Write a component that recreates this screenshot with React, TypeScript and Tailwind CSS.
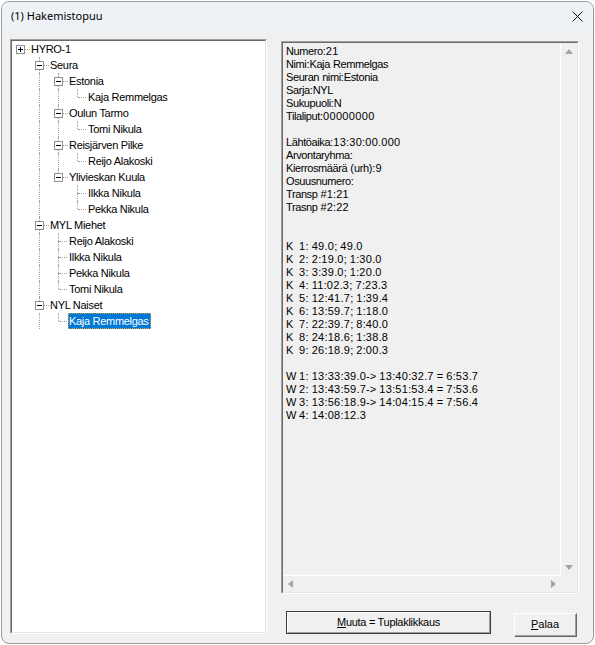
import React from 'react'

type Row = {
  label: string
  level: number
  box?: 'plus' | 'minus'
  up: boolean
  down: boolean
  cont: number[]
  selected?: boolean
}

const rows: Row[] = [
  { label: 'HYRO-1', level: 0, box: 'plus', up: false, down: false, cont: [] },
  { label: 'Seura', level: 1, box: 'minus', up: true, down: true, cont: [] },
  { label: 'Estonia', level: 2, box: 'minus', up: true, down: true, cont: [1] },
  { label: 'Kaja Remmelgas', level: 3, up: true, down: false, cont: [1, 2] },
  { label: 'Oulun Tarmo', level: 2, box: 'minus', up: true, down: true, cont: [1] },
  { label: 'Tomi Nikula', level: 3, up: true, down: false, cont: [1, 2] },
  { label: 'Reisjärven Pilke', level: 2, box: 'minus', up: true, down: true, cont: [1] },
  { label: 'Reijo Alakoski', level: 3, up: true, down: false, cont: [1, 2] },
  { label: 'Ylivieskan Kuula', level: 2, box: 'minus', up: true, down: false, cont: [1] },
  { label: 'Ilkka Nikula', level: 3, up: true, down: true, cont: [1] },
  { label: 'Pekka Nikula', level: 3, up: true, down: false, cont: [1] },
  { label: 'MYL Miehet', level: 1, box: 'minus', up: true, down: true, cont: [] },
  { label: 'Reijo Alakoski', level: 2, up: true, down: true, cont: [1] },
  { label: 'Ilkka Nikula', level: 2, up: true, down: true, cont: [1] },
  { label: 'Pekka Nikula', level: 2, up: true, down: true, cont: [1] },
  { label: 'Tomi Nikula', level: 2, up: true, down: false, cont: [1] },
  { label: 'NYL Naiset', level: 1, box: 'minus', up: true, down: false, cont: [] },
  { label: 'Kaja Remmelgas', level: 2, up: true, down: false, cont: [1], selected: true },
]

const info = [
  'Numero:21',
  'Nimi:Kaja Remmelgas',
  'Seuran nimi:Estonia',
  'Sarja:NYL',
  'Sukupuoli:N',
  'Tilaliput:00000000',
  '',
  'Lähtöaika:13:30:00.000',
  'Arvontaryhma:',
  'Kierrosmäärä (urh):9',
  'Osuusnumero:',
  'Transp #1:21',
  'Trasnp #2:22',
  '',
  '',
  'K  1: 49.0; 49.0',
  'K  2: 2:19.0; 1:30.0',
  'K  3: 3:39.0; 1:20.0',
  'K  4: 11:02.3; 7:23.3',
  'K  5: 12:41.7; 1:39.4',
  'K  6: 13:59.7; 1:18.0',
  'K  7: 22:39.7; 8:40.0',
  'K  8: 24:18.6; 1:38.8',
  'K  9: 26:18.9; 2:00.3',
  '',
  'W 1: 13:33:39.0-> 13:40:32.7 = 6:53.7',
  'W 2: 13:43:59.7-> 13:51:53.4 = 7:53.6',
  'W 3: 13:56:18.9-> 14:04:15.4 = 7:56.4',
  'W 4: 14:08:12.3',
]

function InfoLine({ text }: { text: string }) {
  const parts = text.split(/(\d+|[A-Za-zÀ-ÿ]+)/).filter((p) => p !== '')
  return (
    <div className="h-[13px] leading-[13px] whitespace-pre text-black">
      {parts.map((p, i) =>
        /^\d/.test(p) ? (
          <span key={i} className="tracking-[0.35px]">{p}</span>
        ) : /^[A-Za-zÀ-ÿ]/.test(p) ? (
          <span key={i} className="tracking-[-0.4px]">{p}</span>
        ) : (
          <span key={i}>{p}</span>
        )
      )}
    </div>
  )
}

const dot = 'absolute border-dotted border-[#a0a0a0]'

function Column({ row, col }: { row: Row; col: number }) {
  if (col < row.level) {
    return (
      <div className="relative w-[19px] h-4 shrink-0">
        {row.cont.includes(col) && <div className={`${dot} left-[8px] top-0 h-4 border-l`} />}
      </div>
    )
  }
  const hasBox = !!row.box
  return (
    <div className="relative w-[19px] h-4 shrink-0">
      {row.up && <div className={`${dot} left-[8px] top-0 border-l ${hasBox ? 'h-[4px]' : 'h-[8px]'}`} />}
      {row.down && hasBox && <div className={`${dot} left-[8px] top-[13px] h-[3px] border-l`} />}
      {row.down && !hasBox && <div className={`${dot} left-[8px] top-[8px] h-[8px] border-l`} />}
      <div className={`${dot} top-[8px] border-t ${hasBox ? 'left-[13px] w-[5px]' : 'left-[9px] w-[8px]'}`} />
      {hasBox && (
        <div className="absolute left-[4px] top-[4px] w-[9px] h-[9px] border border-[#919191] bg-white">
          <div className="absolute left-[1px] top-[3px] w-[5px] h-[1px] bg-black" />
          {row.box === 'plus' && <div className="absolute left-[3px] top-[1px] w-[1px] h-[5px] bg-black" />}
        </div>
      )}
    </div>
  )
}

function TreeRow({ row }: { row: Row }) {
  const cols = Array.from({ length: row.level + 1 }, (_, i) => i)
  return (
    <div className="flex h-4 items-stretch">
      {cols.map((c) => (
        <Column key={c} row={row} col={c} />
      ))}
      <span
        className={`-ml-[1px] pl-[1px] pr-[2px] h-4 leading-4 whitespace-nowrap tracking-[-0.3px] ${
          row.selected ? 'bg-[#0078d7] text-white outline outline-1 outline-dotted outline-[#e0a040] -outline-offset-1' : 'text-black'
        }`}
      >
        {row.label}
      </span>
    </div>
  )
}

function Arrow({ dir }: { dir: 'up' | 'down' | 'left' | 'right' }) {
  const pts = {
    up: '0,5 8,5 4,0',
    down: '0,0 8,0 4,5',
    left: '5,0 5,8 0,4',
    right: '0,0 0,8 5,4',
  }[dir]
  const vertical = dir === 'up' || dir === 'down'
  return (
    <svg width={vertical ? 8 : 5} height={vertical ? 5 : 8} viewBox={vertical ? '0 0 8 5' : '0 0 5 8'}>
      <polygon points={pts} fill="#a3a3a3" />
    </svg>
  )
}

export default function App() {
  return (
    <div className="w-[595px] h-[645px] bg-white pl-[1px] pt-[1px]" style={{ fontFamily: '"Liberation Sans", Arial, sans-serif' }}>
      <div className="w-[593px] h-[643px] border border-[#9c9c9c] rounded-[8px] overflow-hidden bg-[#f0f0f0] flex flex-col">
        <div className="h-[28px] shrink-0 bg-[#eef2f7] flex items-center justify-between pl-[9px] pr-[10px]">
          <span className="text-[11px] text-black" style={{ fontFamily: '"Noto Sans", "Open Sans", sans-serif' }}>
            (1) Hakemistopuu
          </span>
          <svg width="11" height="11" viewBox="0 0 11 11">
            <path d="M0.5 0.5 L10.5 10.5 M10.5 0.5 L0.5 10.5" stroke="#111" strokeWidth="1" />
          </svg>
        </div>

        <div className="flex pl-[8px] pt-[9px] gap-[14px] text-[11px]">
          <div className="w-[257px] h-[595px] border-t border-l border-[#a0a0a0] border-r border-b border-r-white border-b-white">
            <div className="h-full border-t border-l border-[#696969] border-r border-b border-r-[#e3e3e3] border-b-[#e3e3e3] bg-white">
              {rows.map((r, i) => (
                <TreeRow key={i} row={r} />
              ))}
            </div>
          </div>

          <div className="flex flex-col mt-[2px]">
            <div className="w-[298px] h-[553px] border-t border-l border-[#a0a0a0] border-r border-b border-r-white border-b-white">
              <div className="h-full flex flex-col border-t border-l border-[#696969] border-r border-b border-r-[#e3e3e3] border-b-[#e3e3e3]">
                <div className="flex flex-1 min-h-0">
                  <div className="flex-1 border-r border-b border-white pl-[3px] pt-[2px] overflow-hidden">
                    {info.map((l, i) => (
                      <InfoLine key={i} text={l} />
                    ))}
                  </div>
                  <div className="w-[16px] flex flex-col justify-between items-center py-[6px]">
                    <Arrow dir="up" />
                    <Arrow dir="down" />
                  </div>
                </div>
                <div className="h-[16px] flex">
                  <div className="flex-1 flex items-center justify-between px-[5px]">
                    <Arrow dir="left" />
                    <Arrow dir="right" />
                  </div>
                  <div className="w-[16px]" />
                </div>
              </div>
            </div>

            <div className="flex items-start mt-[17px] ml-[5px]">
              <button className="w-[205px] h-[23px] border border-[#3c3c3c] bg-[#f0f0f0] p-0">
                <div className="h-full border-t border-l border-white border-r border-b border-r-[#a0a0a0] border-b-[#a0a0a0] flex items-center justify-center tracking-[-0.3px] text-black">
                  <span>
                    <span className="underline">M</span>uuta = Tuplaklikkaus
                  </span>
                </div>
              </button>
              <button className="ml-[23px] mt-[2px] w-[63px] h-[24px] border-t border-l border-white border-r border-b border-r-[#696969] border-b-[#696969] bg-[#f0f0f0] p-0">
                <div className="h-full border-r border-b border-[#a0a0a0] border-t-0 border-l-0 flex items-center justify-center text-black">
                  <span>
                    <span className="underline">P</span>alaa
                  </span>
                </div>
              </button>
            </div>
          </div>
        </div>
      </div>
    </div>
  )
}
